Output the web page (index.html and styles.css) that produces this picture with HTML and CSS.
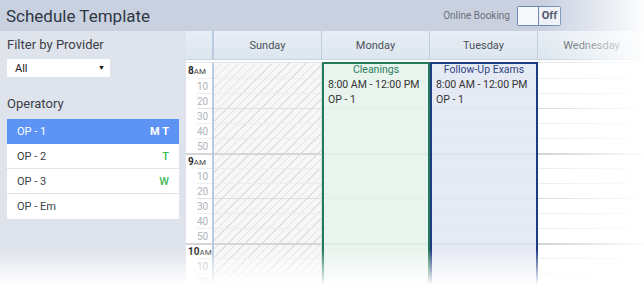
FILE: index.html
```html
<!DOCTYPE html>
<html>
<head>
<meta charset="utf-8">
<link rel="stylesheet" href="styles.css">
</head>
<body>
<div class="app">
  <div class="topbar">
    <div class="title">Schedule Template</div>
    <div class="booking">
      <span class="booking-label">Online Booking</span>
      <div class="toggle"><span class="toggle-knob"></span><span class="toggle-text">Off</span></div>
    </div>
  </div>
  <div class="main">
    <aside class="sidebar">
      <div class="side-label">Filter by Provider</div>
      <div class="select"><span>All</span><span class="caret">▼</span></div>
      <div class="side-label op-label">Operatory</div>
      <ul class="op-list">
        <li class="op active"><span>OP - 1</span><span class="days">M T</span></li>
        <li class="op"><span>OP - 2</span><span class="days">T</span></li>
        <li class="op"><span>OP - 3</span><span class="days">W</span></li>
        <li class="op"><span>OP - Em</span><span class="days"></span></li>
      </ul>
    </aside>
    <section class="calendar">
      <div class="cal-head">
        <div class="hcell time-h"></div>
        <div class="hcell">Sunday</div>
        <div class="hcell">Monday</div>
        <div class="hcell">Tuesday</div>
        <div class="hcell">Wednesday</div>
      </div>
      <div class="cal-body">
        <div class="time-col">
          <div class="t hour"><b>8</b><small>AM</small></div>
          <div class="t">10</div><div class="t">20</div><div class="t half">30</div><div class="t">40</div><div class="t">50</div>
          <div class="t hour"><b>9</b><small>AM</small></div>
          <div class="t">10</div><div class="t">20</div><div class="t half">30</div><div class="t">40</div><div class="t">50</div>
          <div class="t hour"><b>10</b><small>AM</small></div>
          <div class="t">10</div><div class="t">20</div>
        </div>
        <div class="day closed">
          <div class="s h"></div><div class="s"></div><div class="s"></div><div class="s hh"></div><div class="s"></div><div class="s"></div>
          <div class="s h"></div><div class="s"></div><div class="s"></div><div class="s hh"></div><div class="s"></div><div class="s"></div>
          <div class="s h"></div><div class="s"></div><div class="s"></div>
        </div>
        <div class="day">
          <div class="s h"></div><div class="s"></div><div class="s"></div><div class="s hh"></div><div class="s"></div><div class="s"></div>
          <div class="s h"></div><div class="s"></div><div class="s"></div><div class="s hh"></div><div class="s"></div><div class="s"></div>
          <div class="s h"></div><div class="s"></div><div class="s"></div>
          <div class="event green">
            <div class="ev-title">Cleanings</div>
            <div class="ev-line">8:00 AM - 12:00 PM</div>
            <div class="ev-line">OP - 1</div>
          </div>
        </div>
        <div class="day">
          <div class="s h"></div><div class="s"></div><div class="s"></div><div class="s hh"></div><div class="s"></div><div class="s"></div>
          <div class="s h"></div><div class="s"></div><div class="s"></div><div class="s hh"></div><div class="s"></div><div class="s"></div>
          <div class="s h"></div><div class="s"></div><div class="s"></div>
          <div class="event navy">
            <div class="ev-title">Follow-Up Exams</div>
            <div class="ev-line">8:00 AM - 12:00 PM</div>
            <div class="ev-line">OP - 1</div>
          </div>
        </div>
        <div class="day">
          <div class="s h"></div><div class="s"></div><div class="s"></div><div class="s hh"></div><div class="s"></div><div class="s"></div>
          <div class="s h"></div><div class="s"></div><div class="s"></div><div class="s hh"></div><div class="s"></div><div class="s"></div>
          <div class="s h"></div><div class="s"></div><div class="s"></div>
        </div>
      </div>
    </section>
  </div>
  <div class="fade-right"></div>
  <div class="fade-bottom"></div>
</div>
</body>
</html>
```
FILE: styles.css
```css
* { box-sizing: border-box; }
html, body { margin: 0; padding: 0; }
body {
  width: 644px;
  height: 285px;
  overflow: hidden;
  background: #fff;
  font-family: Roboto, "Liberation Sans", Arial, sans-serif;
  color: #333;
}
.app {
  position: relative;
  width: 644px;
  height: 285px;
  overflow: hidden;
  display: flex;
  flex-direction: column;
}
.topbar {
  height: 31px;
  flex: none;
  background: #c9d1e1;
  display: flex;
  align-items: center;
  justify-content: space-between;
  padding: 0 83px 0 6px;
}
.title {
  font-size: 17px;
  color: #2f3744;
}
.booking {
  display: flex;
  align-items: center;
  gap: 7px;
}
.booking-label {
  font-size: 10px;
  color: #6c7078;
  white-space: nowrap;
}
.toggle {
  display: flex;
  width: 44px;
  height: 20px;
  border: 1px solid #6d89b0;
  border-radius: 2px;
  background: #fff;
  overflow: hidden;
}
.toggle-knob {
  width: 21px;
  background: #f7f8fc;
  border-right: 1px solid #6d89b0;
}
.toggle-text {
  flex: 1;
  font-size: 11px;
  font-weight: 700;
  color: #4a5464;
  display: flex;
  align-items: center;
  justify-content: center;
  background: #eef1f7;
}
.main {
  flex: 1;
  display: flex;
  min-height: 0;
}
.sidebar {
  width: 186px;
  flex: none;
  background: #dfe3ec;
  padding: 4px 7px 0 7px;
}
.side-label {
  font-size: 13px;
  color: #3a3f48;
  height: 20px;
  line-height: 20px;
}
.select {
  margin-top: 4px;
  width: 103px;
  height: 18px;
  background: #fff;
  display: flex;
  align-items: center;
  justify-content: space-between;
  padding: 0 5px 0 8px;
  font-size: 11px;
  color: #222;
}
.caret { font-size: 7px; color: #111; }
.op-label { margin-top: 17px; }
.op-list {
  list-style: none;
  margin: 5px 0 0 0;
  padding: 0;
  width: 172px;
  background: #fff;
}
.op {
  height: 25px;
  display: flex;
  align-items: center;
  justify-content: space-between;
  padding: 0 10px;
  font-size: 11px;
  color: #3a3f48;
  border-bottom: 1px solid #e1e4ea;
}
.op:last-child { border-bottom: none; }
.op .days { color: #3dbb55; font-weight: 500; }
.op.active {
  background: #5d93f4;
  color: #fff;
  border-bottom: none;
}
.op.active .days { color: #fff; font-weight: 700; }
.calendar {
  flex: 1;
  min-width: 0;
  overflow: hidden;
  background: #fff;
}
.cal-head {
  display: grid;
  grid-template-columns: 28px repeat(4, 108px);
  height: 29px;
  background: linear-gradient(#e8eef5, #dce6ee);
  border-bottom: 1px solid #c7d3de;
}
.hcell {
  border-right: 1px solid #bfcedc;
  display: flex;
  align-items: center;
  justify-content: center;
  font-size: 11px;
  color: #4d5158;
}
.time-h { border-right: 2px solid #b9cbe0; }
.cal-body {
  display: grid;
  grid-template-columns: 28px repeat(4, 108px);
  margin-top: 2px;
  border-top: 1px solid #e4e7ea;
}
.time-col {
  border-right: 2px solid #b9cbe0;
}
.t {
  height: 15px;
  font-size: 10px;
  color: #b1b4b8;
  text-align: right;
  padding-right: 4px;
  line-height: 15px;
  border-top: 1px solid #eceeef;
  margin-left: 11px;
}
.t.half { border-top-color: #dedfe0; }
.t.hour {
  margin-left: 0;
  border-top: 2px solid #d3d5d7;
  color: #333;
  text-align: left;
  padding-left: 2px;
  line-height: 13px;
}
.t.hour:first-child { border-top: none; line-height: 15px; }
.t.hour b { font-size: 10px; font-weight: 700; color: #2a2a2a; }
.t.hour small { font-size: 8px; color: #444; }
.day {
  position: relative;
  border-right: 1px solid #d7dde3;
}
.day.closed {
  background-color: #f7f7f7;
  background-image: repeating-linear-gradient(135deg, transparent 0 5px, #e0e0e0 5px 6px);
}
.s {
  height: 15px;
  border-top: 1px solid #ebedee;
}
.s.hh { border-top-color: #dcdddf; }
.s.h { border-top: 2px solid #d3d5d7; }
.s.h:first-child { border-top: none; }
.event {
  position: absolute;
  left: 0;
  top: -1px;
  width: 108px;
  height: 260px;
  border: 2px solid;
  padding: 0 4px;
  font-size: 10.5px;
  line-height: 15px;
}
.event.green {
  border-color: #237a58;
  background: rgba(228, 241, 234, 0.8);
}
.event.navy {
  border-color: #1f3c82;
  background: rgba(224, 229, 241, 0.8);
}
.ev-title { margin-top: -2px; text-align: center; font-size: 10.5px; }
.green .ev-title { color: #2e7e5f; }
.navy .ev-title { color: #2f4585; }
.ev-line { color: #333; }
.fade-right {
  position: absolute;
  top: 0;
  right: 0;
  width: 100px;
  height: 285px;
  background: linear-gradient(to right, rgba(255,255,255,0), rgba(255,255,255,0.95));
  pointer-events: none;
}
.fade-bottom {
  position: absolute;
  left: 0;
  bottom: 0;
  width: 644px;
  height: 36px;
  background: linear-gradient(to bottom, rgba(255,255,255,0), rgba(255,255,255,1));
  pointer-events: none;
}
```
